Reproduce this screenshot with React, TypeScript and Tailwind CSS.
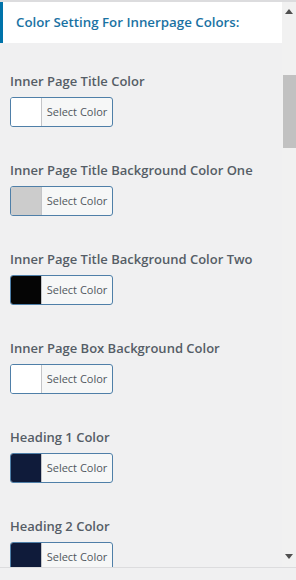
const ITEMS = [
  { label: "Inner Page Title Color", color: "#ffffff" },
  { label: "Inner Page Title Background Color One", color: "#cccccc" },
  { label: "Inner Page Title Background Color Two", color: "#050505" },
  { label: "Inner Page Box Background Color", color: "#ffffff" },
  { label: "Heading 1 Color", color: "#0f1b3a" },
  { label: "Heading 2 Color", color: "#0f1b3a" },
];

function ColorButton({ color }: { color: string }) {
  return (
    <button className="flex h-[30px] w-[103px] shrink-0 items-stretch overflow-hidden rounded-[3px] border border-[#4f7fa8] bg-[#f6f7f7] p-0">
      <span className="w-[31px] border-r border-[#c3c4c7]" style={{ backgroundColor: color }} />
      <span className="flex flex-1 items-center justify-center text-[11px] text-[#50575e]">Select Color</span>
    </button>
  );
}

export default function App() {
  return (
    <div
      className="flex h-[580px] w-[296px] flex-col overflow-hidden bg-[#f0f0f1]"
      style={{ fontFamily: '"Open Sans", "Noto Sans", sans-serif' }}
    >
      <div className="flex min-h-0 flex-1 border-t-2 border-[#dcdcde]">
        <div className="flex min-w-0 flex-1 flex-col overflow-hidden">
          <div className="flex h-[41px] shrink-0 items-center border-l-[3px] border-[#0073aa] bg-white pl-[13px]">
            <h3 className="text-[13.3px] font-semibold text-[#1a72a3]">Color Setting For Innerpage Colors:</h3>
          </div>
          <div className="flex shrink-0 flex-col gap-[33px] px-[10px] pt-[28px]">
            {ITEMS.map(item => (
              <div key={item.label} className="flex flex-col gap-[6px]">
                <span className="text-[13px] leading-[20px] font-semibold text-[#555d66]">{item.label}</span>
                <ColorButton color={item.color} />
              </div>
            ))}
          </div>
        </div>
        <div className="flex w-[14px] flex-col items-center bg-[#f1f1f1]">
          <svg width="8" height="5" viewBox="0 0 8 5" className="mt-[7px]">
            <path d="M0 5 L4 0 L8 5 Z" fill="#505050" />
          </svg>
          <div className="mt-[61px] h-[73px] w-[13px] bg-[#c1c1c1]" />
          <div className="flex-1" />
          <svg width="8" height="5" viewBox="0 0 8 5" className="mb-[8px]">
            <path d="M0 0 L8 0 L4 5 Z" fill="#505050" />
          </svg>
        </div>
      </div>
      <div className="h-[13px] border-t border-[#dcdcde] bg-[#f0f0f1]" />
    </div>
  );
}
